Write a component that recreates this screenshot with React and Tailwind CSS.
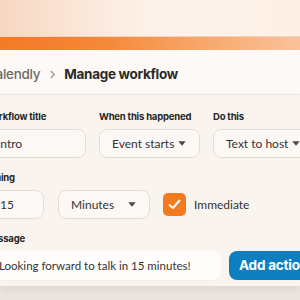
import React from "react";

function Caret({ className = "" }) {
  return (
    <svg width="8" height="5" viewBox="0 0 8 5" className={className}>
      <path d="M0.3 0.3 L7.7 0.3 L4 4.7 Z" fill="#4a4a4a" />
    </svg>
  );
}

function Label({ children }) {
  return (
    <div className="text-[9.5px] leading-[14px] font-bold tracking-[-0.2px] text-[#262626] mb-[5px] whitespace-nowrap" style={{ fontFamily: "Inter, sans-serif" }}>
      {children}
    </div>
  );
}

function Field({ children, className = "" }) {
  return (
    <div className={"h-[29px] rounded-[8px] border border-[#e7dcd3] bg-[#fcf8f5] flex items-center px-[12px] text-[12px] text-[#333] whitespace-nowrap " + className}>
      {children}
    </div>
  );
}

export default function App() {
  return (
    <div className="w-[300px] h-[300px] overflow-hidden bg-[#ebe4df]" style={{ fontFamily: "Lato, sans-serif" }}>
      <div className="h-[37px] bg-[linear-gradient(90deg,#f8d6c1_0%,#fbe8db_30%,#fdf3ec_55%,#fdf0e6_100%)] border-b border-[#f3d3bd]" />
      <div className="h-[13px] bg-[linear-gradient(90deg,#f37a26_0%,#f5883a_35%,#f7a667_65%,#f9c29c_100%)]" />
      <div className="h-[45px] bg-[#fcf9f6] border-b border-[#efe7e0] flex items-center pt-[5px]">
        <div className="ml-[-14px] flex items-center text-[13.5px] tracking-[-0.3px] whitespace-nowrap" style={{ fontFamily: "Inter, sans-serif" }}>
          <span className="text-[#6f6b68] font-medium">Calendly</span>
          <svg width="7" height="9" viewBox="0 0 7 9" className="ml-[9px] mr-[8px]">
            <path d="M1.8 1 L5.3 4.5 L1.8 8" fill="none" stroke="#9a9692" strokeWidth="1.2" />
          </svg>
          <span className="text-[#2b2a29] font-bold">Manage workflow</span>
        </div>
      </div>
      <div className="bg-[#faf4ef] h-[191px] pt-[15px] shadow-[0_4px_8px_rgba(0,0,0,0.06)]">
        <div className="ml-[-16px] flex flex-col">
          <div className="flex gap-[13px]">
            <div className="w-[102px] shrink-0">
              <Label>Workflow title</Label>
              <Field>Intro</Field>
            </div>
            <div className="w-[101px] shrink-0">
              <Label>When this happened</Label>
              <Field className="justify-between pr-[13px]"><span>Event starts</span><Caret /></Field>
            </div>
            <div className="w-[100px] shrink-0">
              <Label>Do this</Label>
              <Field className="justify-between"><span>Text to host</span><Caret /></Field>
            </div>
          </div>
          <div className="flex mt-[13px] items-end">
            <div className="w-[60px] shrink-0">
              <Label>Timing</Label>
              <Field className="px-[15px]">15</Field>
            </div>
            <div className="w-[92px] shrink-0 ml-[14px]">
              <Field className="justify-between px-[11px] pr-[13px]"><span>Minutes</span><Caret /></Field>
            </div>
            <div className="h-[29px] flex items-center ml-[13px]">
              <div className="w-[23px] h-[23px] rounded-[5px] bg-[#f47a1f] flex items-center justify-center">
                <svg width="13" height="11" viewBox="0 0 13 11">
                  <path d="M1.5 6 L5 9 L11.5 1.5" fill="none" stroke="#fff" strokeWidth="2" strokeLinecap="round" strokeLinejoin="round" />
                </svg>
              </div>
              <span className="ml-[8px] text-[12px] text-[#333]">Immediate</span>
            </div>
          </div>
          <div className="flex mt-[13px] items-end">
            <div className="w-[237px] shrink-0">
              <Label>Message</Label>
              <div className="h-[29px] rounded-[8px] bg-[#fffdfb] flex items-center pl-[15px] text-[11.5px] text-[#333] whitespace-nowrap shadow-[0_1px_2px_rgba(0,0,0,0.03)]">
                Looking forward to talk in 15 minutes!
              </div>
            </div>
            <div className="ml-[8px] h-[29px] rounded-[8px] bg-[#0d7fc1] flex items-center pl-[10px] pr-[12px] text-white font-bold text-[13.5px] whitespace-nowrap tracking-[-0.2px]" style={{ fontFamily: "Inter, sans-serif" }}>
              Add action
            </div>
          </div>
        </div>
      </div>
    </div>
  );
}
